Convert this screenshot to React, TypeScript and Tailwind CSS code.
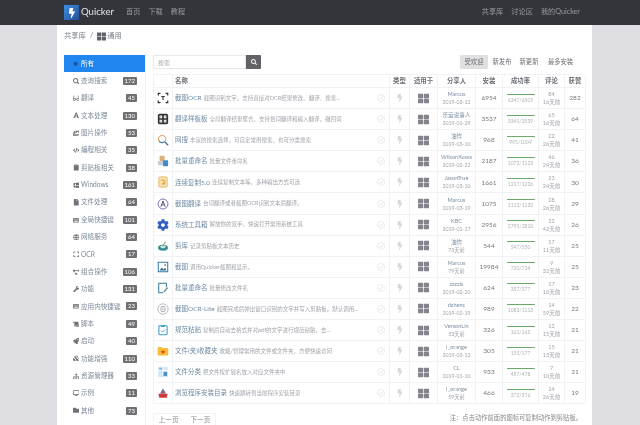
import React from "react";
import {
  FaStar, FaSearch, FaGlasses, FaFont, FaImages, FaCode, FaClipboard, FaWindows, FaFile, FaKeyboard,
  FaGlobe, FaExpand, FaProjectDiagram, FaWrench, FaScroll, FaRocket, FaCubes, FaSitemap, FaDesktop,
  FaFolder, FaBolt, FaThLarge, FaRegCheckCircle, FaCog,
} from "react-icons/fa";

const cats: [React.ElementType, string, string][] = [
  [FaSearch, "查询搜索", "172"], [FaGlasses, "翻译", "45"], [FaFont, "文本处理", "130"], [FaImages, "图片操作", "53"],
  [FaCode, "编程相关", "35"], [FaClipboard, "剪贴板相关", "38"], [FaWindows, "Windows", "161"], [FaFile, "文件处理", "64"],
  [FaKeyboard, "全局快捷键", "101"], [FaGlobe, "网络服务", "64"], [FaExpand, "OCR", "17"], [FaProjectDiagram, "组合操作", "106"],
  [FaWrench, "功能", "131"], [FaKeyboard, "应用内快捷键", "23"], [FaScroll, "脚本", "49"], [FaRocket, "启动", "40"],
  [FaCubes, "功能增强", "110"], [FaSitemap, "资源管理器", "33"], [FaDesktop, "示例", "11"], [FaFolder, "其他", "73"],
];

const Svg = ({ children }: { children: React.ReactNode }) => (
  <svg viewBox="0 0 14 14" className="h-[12px] w-[12px]" fill="none">{children}</svg>
);

const icons: React.ReactNode[] = [
  <Svg><path d="M1.5 4V1.5H4M10 1.5h2.5V4M12.5 10v2.5H10M4 12.5H1.5V10" stroke="#333" strokeWidth="1.4" /><path d="M5 5.2h4M7 5.2v4" stroke="#333" strokeWidth="1.3" /></Svg>,
  <Svg><rect x="1" y="1" width="12" height="12" rx="2" fill="#333" /><path d="M3 3h3v3H3zM8 3h3v3H8zM3 8h3v3H3zM8 8h3v3H8z" fill="#fff" /><path d="M4 4h1v1H4zM9 4h1v1H9zM4 9h1v1H4zM9 9h1v1H9z" fill="#333" /></Svg>,
  <Svg><circle cx="6" cy="6" r="4.3" stroke="#e0a060" strokeWidth="1.2" /><path d="M2.2 8a4.3 4.3 0 0 0 7 .5" stroke="#4a80c0" strokeWidth="1.2" /><path d="M9.2 9.2 13 13" stroke="#3f6fb0" strokeWidth="1.6" /></Svg>,
  <Svg><rect x="3" y="1" width="6" height="6" rx="1.5" fill="#d9b277" /><rect x="1" y="7" width="6" height="5" rx="1" fill="#c6cfd8" /><rect x="7" y="6" width="6" height="7" rx="1" fill="#3f8bc9" /></Svg>,
  <Svg><rect x="2" y="1" width="10" height="12" rx="1.5" fill="#f4dfae" stroke="#e6bf73" /><path d="M5 5h4v4H6.5M6.5 9 8 7.8M6.5 9 8 10.2" stroke="#e29a2d" strokeWidth="1.1" /></Svg>,
  <Svg><circle cx="7" cy="7" r="5.8" stroke="#6a5fb0" strokeWidth="1" /><path d="M4.5 10.2 7 3.6l2.5 6.6M5.4 8h3.2" stroke="#4c4a8c" strokeWidth="1.1" /></Svg>,
  <FaCog className="h-[12px] w-[12px] text-[#3560c0]" />,
  <Svg><ellipse cx="7" cy="9" rx="5.8" ry="3.4" fill="#3a8f96" /><ellipse cx="7" cy="8" rx="3.2" ry="1.5" fill="#cfe6d8" /><path d="M7 6.5 10 2" stroke="#7fa868" strokeWidth="1.2" /></Svg>,
  <Svg><path d="M1.5 1.5h11v11h-11z" stroke="#3878a8" strokeWidth="1.2" /><path d="m3 11 2.5-3.5L7.5 10l2-2 1.5 3z" fill="#2f6a96" /><circle cx="9.5" cy="4.8" r="1" fill="#2f6a96" /></Svg>,
  <Svg><path d="M11 6V1.5H2v11h5" stroke="#3a8098" strokeWidth="1.2" /><path d="m7.5 11 4.5-5 1 1-4.5 5H7.5z" fill="#3a8098" /></Svg>,
  <Svg><circle cx="7" cy="7" r="6" stroke="#a8a8b0" strokeWidth="0.9" /><rect x="4.6" y="4" width="4.8" height="6" rx="0.8" stroke="#9a9aa2" strokeWidth="0.9" /><path d="M5.8 6h2.4M5.8 8h2.4" stroke="#9a9aa2" strokeWidth="0.7" /></Svg>,
  <Svg><rect x="2.2" y="2" width="9.6" height="10.5" rx="1" stroke="#3a9ac0" strokeWidth="1.2" /><path d="M5 1.5h4v2H5z" fill="#3a9ac0" /><path d="m4.8 7.8 1.6 1.6 3-3" stroke="#3a9ac0" strokeWidth="1" /></Svg>,
  <Svg><path d="M.8 3.2a1 1 0 0 1 1-1h3.6l1.2 1.4h5.6a1 1 0 0 1 1 1v6.6a1 1 0 0 1-1 1H1.8a1 1 0 0 1-1-1z" fill="#f9bd3a" /><path d="M7 10.4 4.8 8.2a1.2 1.2 0 0 1 2.2-1 1.2 1.2 0 0 1 2.2 1z" fill="#d5531f" /></Svg>,
  <Svg><rect x="1.5" y="1" width="11" height="12" fill="#d3e6f5" /><path d="M1.5 5h11M7 1v12" stroke="#fff" strokeWidth="0.8" /><rect x="7.6" y="7" width="4.2" height="4.6" fill="#4a90c8" /><rect x="2.6" y="2" width="3.4" height="2.2" fill="#7fb4dc" /></Svg>,
  <Svg><path d="M1.5 8h11l-1.2 4.5H2.7z" fill="#d23a3a" /><path d="M3.5 7.5 7 1.8l3.5 5.7z" fill="#3a7fb8" /><circle cx="7" cy="6.3" r="1.7" fill="#e04a3a" /></Svg>,
];

type R = [string, string, string, string, string, string, number, string, string, string];
const rows: R[] = [
  ["截图OCR", "截图识别文字，支持直接对OCR结果修改、翻译、搜索...", "Marcus", "2019-03-12", "6954", "6347/6505", 97, "84", "16天前", "282"],
  ["翻译样板板", "全局翻译结果聚合，支持划词翻译和输入翻译，撤回词", "乐运说事人", "2019-01-29", "3537", "3341/3539", 94, "65", "16天前", "64"],
  ["网搜", "丰富的搜索选择，可自定常用搜索，也可分类搜索", "油炸", "2019-03-10", "968", "995/1009", 98, "22", "26天前", "41"],
  ["批量重命名", "批量文件重命名", "WilsonXuwx", "2019-02-22", "2187", "1072/1123", 95, "46", "24天前", "36"],
  ["连续复制5.0", "连续复制文本等，多种输出方式可选", "JasonTrue", "2019-03-10", "1661", "1217/1236", 98, "23", "24天前", "30"],
  ["截图翻译", "台词翻译或者截图OCR识别文本后翻译。", "Marcus", "2019-03-19", "1075", "1113/1132", 98, "28", "26天前", "29"],
  ["系统工具箱", "解放你的双手，快速打开常用系统工具", "KBC", "2019-01-17", "2956", "2795/2810", 99, "22", "42天前", "26"],
  ["剪库", "记录剪贴板文本历史", "油炸", "73天前", "544", "547/550", 99, "17", "11天前", "25"],
  ["截图", "调用Quicker截图和显示。", "Marcus", "79天前", "19984", "720/724", 99, "9", "32天前", "25"],
  ["批量重命名", "批量修改文件名", "zzzzls", "2019-02-20", "624", "357/377", 95, "17", "10天前", "23"],
  ["截图OCR-Lite", "截图完成后弹出窗口识别的文字并写入剪贴板。默认调用...", "dzhenc", "2019-02-19", "989", "1083/1113", 97, "14", "59天前", "22"],
  ["规范粘贴", "复制后自动去格式并对pdf的文字进行规范粘贴，去...", "VersonLin", "53天前", "326", "161/165", 98, "12", "15天前", "21"],
  ["文件(夹)收藏夹", "收藏/管理常用的文件或文件夹，方便快速访问", "i_orange", "2019-03-12", "305", "155/177", 88, "15", "13天前", "21"],
  ["文件分类", "把文件按扩展名放入对应文件夹中", "CL", "2019-01-10", "933", "457/478", 96, "7", "10天前", "21"],
  ["浏览程序安装目录", "快速跳转到当前程序安装目录", "i_orange", "59天前", "466", "372/376", 99, "14", "26天前", "19"],
];

const grid = "grid grid-cols-[19px_217px_20px_28px_38px_27px_36px_26px_21px]";
const cell = "flex flex-col items-center justify-center border-r border-[#f0f2f4] min-w-0";

export default function App() {
  return (
    <div className="flex h-[425px] w-[640px] flex-col overflow-hidden bg-[#dfdfe3] font-['Lato','Noto_Sans_CJK_SC',sans-serif] blur-[0.35px]">
      <header className="flex h-[25px] shrink-0 items-center bg-[#33353a] pl-[64px]">
        <nav className="flex w-[516px] items-center text-[7.2px] text-[#9a9ba0]">
          <div className="flex h-[15px] w-[15px] items-center justify-center bg-gradient-to-br from-[#3f8fe6] to-[#234f96]">
            <FaBolt className="h-[10px] w-[10px] text-white" />
          </div>
          <span className="ml-[2px] text-[9.6px] text-[#e4e5e8]">Quicker</span>
          <div className="ml-[12px] flex gap-[8px]">
            <span>首页</span><span>下载</span><span>教程</span>
          </div>
          <div className="ml-auto flex gap-[8px]">
            <span>共享库</span><span>讨论区</span><span>我的Quicker</span>
          </div>
        </nav>
      </header>

      <main className="ml-[57px] flex w-[535px] flex-1 flex-col bg-white px-[7px]">
        <div className="flex h-[22px] shrink-0 items-center text-[7.3px] text-[#7b8088]">
          <span>共享库</span>
          <span className="mx-[4px]">/</span>
          <FaThLarge className="mr-[1px] h-[9px] w-[9px] text-[#62626a]" />
          <span>通用</span>
        </div>

        <div className="mt-[8px] flex gap-[7px]">
          <aside className="w-[82px] shrink-0 border-r border-[#eef0f2] text-[6.6px] text-[#7d8a98]">
            <div className="flex h-[17.35px] items-center bg-[#2185f0] pl-[9px] text-white">
              <FaStar className="mr-[3px] h-[5px] w-[5px] text-[#1a4f96]" />
              <span>所有</span>
            </div>
            {cats.map(([Icon, label, n]) => (
              <div key={label} className="flex h-[17.35px] items-center">
                <div className="flex w-[17px] justify-end pr-[2px]">
                  <Icon className="h-[6.5px] w-[6.5px] text-[#6f7378]" />
                </div>
                <span>{label}</span>
                <span className="ml-auto mr-[8px] rounded-[1px] bg-[#707074] px-[2px] text-[6px] leading-[8px] text-white">{n}</span>
              </div>
            ))}
          </aside>

          <section className="flex w-[432px] flex-col">
            <div className="flex h-[14px] items-center text-[6.3px] text-[#6a6d72]">
              <div className="flex h-full w-[93px] items-center rounded-l-[1px] border border-[#e9e9eb] pl-[4px] text-[6px] text-[#a4a8ae]">搜索</div>
              <button className="flex h-full w-[15px] items-center justify-center rounded-r-[1px] bg-[#636367]">
                <FaSearch className="h-[6px] w-[6px] text-white" />
              </button>
              <div className="ml-auto mr-[10px] flex h-full items-center">
                <span className="flex h-full w-[28px] items-center justify-center rounded-[1px] bg-[#e0e0e0]">受欢迎</span>
                <span className="ml-[3px] w-[22px] text-center">新发布</span>
                <span className="ml-[5px] w-[22px] text-center">新更新</span>
                <span className="ml-[6px] w-[29px] text-center">最多安装</span>
              </div>
            </div>

            <div className="mt-[5px] border-l border-[#f0f2f4] text-[5.5px] text-[#a0a4aa]">
              <div className={`${grid} h-[14px] border-y border-[#f0f2f4] text-[6.4px] font-bold text-[#6a6e74]`}>
                <div className={cell} />
                <div className="flex items-center border-r border-[#f0f2f4] pl-[2px]">名称</div>
                <div className={cell}>类型</div>
                <div className={cell}>适用于</div>
                <div className={cell}>分享人</div>
                <div className={cell}>安装</div>
                <div className={cell}>成功率</div>
                <div className={cell}>评论</div>
                <div className={cell}>获赞</div>
              </div>
              {rows.map((r, i) => (
                <div key={i} className={`${grid} h-[21.1px] border-b border-[#f0f2f4]`}>
                  <div className={cell}>{icons[i]}</div>
                  <div className="flex min-w-0 items-center border-r border-[#f0f2f4] pl-[2px]">
                    <span className="mr-[2px] shrink-0 text-[6.5px] text-[#6f8aa4]">{r[0]}</span>
                    <span className="truncate">{r[1]}</span>
                    <FaRegCheckCircle className="ml-auto mr-[4px] h-[8px] w-[8px] shrink-0 text-[#e2e8e8]" />
                  </div>
                  <div className={cell}><FaBolt className="h-[8px] w-[8px] text-[#d4d9dd]" /></div>
                  <div className={cell}><FaThLarge className="h-[11px] w-[11px] text-[#84848c]" /></div>
                  <div className={`${cell} leading-[8px]`}>
                    <span className="text-[5.6px] text-[#7d90a2]">{r[2]}</span>
                    <span className="text-[5.2px]">{r[3]}</span>
                  </div>
                  <div className={`${cell} text-[6.5px] font-normal text-[#75787e]`}>{r[4]}</div>
                  <div className={cell}>
                    <div className="mb-[2px] h-[1px] w-[28px] bg-[#7fb47f]">
                      <div className="h-full bg-[#6aa96a]" style={{ width: `${r[6]}%` }} />
                    </div>
                    <span className="text-[5px] leading-[6px] text-[#aeb2b6]">{r[5]}</span>
                  </div>
                  <div className={`${cell} leading-[8px]`}>
                    <span>{r[7]}</span>
                    <span>{r[8]}</span>
                  </div>
                  <div className={`${cell} text-[6.5px] font-normal text-[#75787e]`}>{r[9]}</div>
                </div>
              ))}
            </div>

            <div className="flex items-start">
              <div className="mt-[9px] flex h-[14px] w-[63px] items-center justify-center gap-[12px] border border-[#f0f2f4] text-[6.6px] text-[#888]">
                <span>上一页</span><span>下一页</span>
              </div>
              <span className="ml-auto mr-[3px] mt-[9px] text-[6.3px] text-[#888]">注：点击动作前面的图标可复制动作到剪贴板。</span>
            </div>
          </section>
        </div>
      </main>
    </div>
  );
}
